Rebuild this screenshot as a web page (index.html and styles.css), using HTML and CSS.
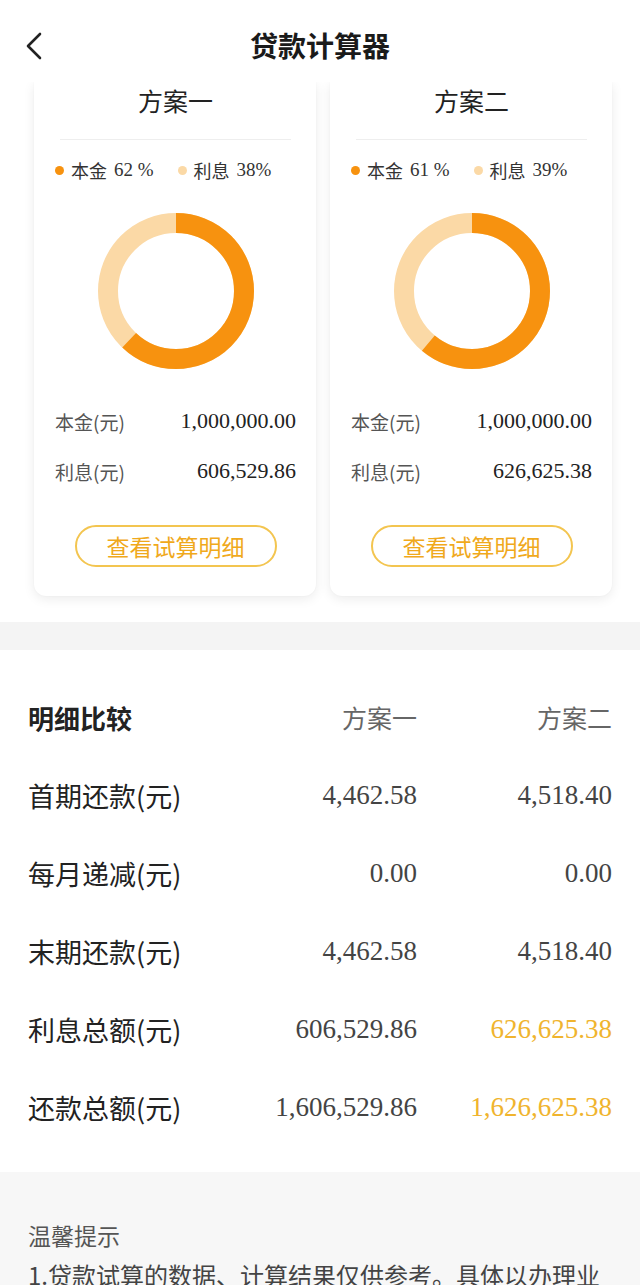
FILE: index.html
```html
<!DOCTYPE html>
<html lang="zh-CN">
<head>
<meta charset="utf-8">
<title>贷款计算器</title>
<link rel="stylesheet" href="styles.css">
</head>
<body>
<div class="page">
  <header class="topbar">
    <span class="back">
      <svg width="18" height="28" viewBox="0 0 18 28"><path d="M15 2 L3 14 L15 26" fill="none" stroke="#222" stroke-width="2.6" stroke-linecap="round" stroke-linejoin="round"/></svg>
    </span>
    <h1 class="title">贷款计算器</h1>
  </header>

  <section class="cards">
    <div class="card">
      <div class="card-title">方案一</div>
      <div class="divider"></div>
      <div class="legend">
        <span class="lg"><i class="dot dot-main"></i>本金 <em>62 %</em></span>
        <span class="lg"><i class="dot dot-int"></i>利息 <em>38%</em></span>
      </div>
      <div class="donut">
        <svg width="156" height="156" viewBox="0 0 156 156">
          <circle cx="78" cy="78" r="68" fill="none" stroke="#fbd9a6" stroke-width="20"/>
          <circle cx="78" cy="78" r="68" fill="none" stroke="#f7920f" stroke-width="20" stroke-dasharray="264.9 427.26" transform="rotate(-90 78 78)"/>
        </svg>
      </div>
      <div class="kv"><span class="k">本金(元)</span><span class="v">1,000,000.00</span></div>
      <div class="kv kv2"><span class="k">利息(元)</span><span class="v">606,529.86</span></div>
      <div class="btn">查看试算明细</div>
    </div>
    <div class="card">
      <div class="card-title">方案二</div>
      <div class="divider"></div>
      <div class="legend">
        <span class="lg"><i class="dot dot-main"></i>本金 <em>61 %</em></span>
        <span class="lg"><i class="dot dot-int"></i>利息 <em>39%</em></span>
      </div>
      <div class="donut">
        <svg width="156" height="156" viewBox="0 0 156 156">
          <circle cx="78" cy="78" r="68" fill="none" stroke="#fbd9a6" stroke-width="20"/>
          <circle cx="78" cy="78" r="68" fill="none" stroke="#f7920f" stroke-width="20" stroke-dasharray="260.6 427.26" transform="rotate(-90 78 78)"/>
        </svg>
      </div>
      <div class="kv"><span class="k">本金(元)</span><span class="v">1,000,000.00</span></div>
      <div class="kv kv2"><span class="k">利息(元)</span><span class="v">626,625.38</span></div>
      <div class="btn">查看试算明细</div>
    </div>
  </section>

  <div class="band"></div>

  <section class="compare">
    <div class="row head">
      <span class="lbl strong">明细比较</span>
      <span class="col">方案一</span>
      <span class="col">方案二</span>
    </div>
    <div class="row">
      <span class="lbl">首期还款(元)</span>
      <span class="num">4,462.58</span>
      <span class="num">4,518.40</span>
    </div>
    <div class="row">
      <span class="lbl">每月递减(元)</span>
      <span class="num">0.00</span>
      <span class="num">0.00</span>
    </div>
    <div class="row">
      <span class="lbl">末期还款(元)</span>
      <span class="num">4,462.58</span>
      <span class="num">4,518.40</span>
    </div>
    <div class="row">
      <span class="lbl">利息总额(元)</span>
      <span class="num">606,529.86</span>
      <span class="num hi">626,625.38</span>
    </div>
    <div class="row">
      <span class="lbl">还款总额(元)</span>
      <span class="num">1,606,529.86</span>
      <span class="num hi">1,626,625.38</span>
    </div>
  </section>

  <section class="tips">
    <div class="tips-title">温馨提示</div>
    <p class="tips-text">1.贷款试算的数据、计算结果仅供参考。具体以办理业务时的实际结果为准。</p>
  </section>
</div>
</body>
</html>
```

FILE: styles.css
```css
* { box-sizing: border-box; }
html, body { margin: 0; padding: 0; background: #fff; }
body {
  font-family: "Noto Sans CJK SC", "Noto Sans", sans-serif;
  color: #222;
  width: 640px;
  height: 1285px;
  overflow: hidden;
}
.page { width: 640px; }

.topbar {
  height: 82px;
  display: flex;
  align-items: center;
  justify-content: center;
  position: relative;
  background: #fff;
  padding-top: 8px;
}
.back {
  position: absolute;
  left: 25px;
  top: 32px;
  width: 18px;
  height: 28px;
  display: block;
}
.back svg { display: block; }
.title {
  margin: 0;
  font-size: 28px;
  font-weight: 700;
  line-height: 36px;
  color: #1a1a1a;
}

.cards {
  display: flex;
  gap: 14px;
  padding: 0 28px 26px 34px;
  background: #fff;
}
.card {
  width: 282px;
  background: #fff;
  border-radius: 0 0 12px 12px;
  box-shadow: 0 3px 12px rgba(0, 0, 0, 0.08), 0 0 2px rgba(0,0,0,0.04);
  padding: 0 20px 29px 21px;
  display: flex;
  flex-direction: column;
}
.card-title {
  text-align: center;
  font-size: 25px;
  line-height: 36px;
  color: #222;
}
.divider {
  height: 1px;
  background: #eeeeee;
  margin: 21px 5px 0 5px;
}
.legend {
  margin-top: 18px;
  height: 24px;
  display: flex;
  align-items: center;
  gap: 24px;
  font-size: 18px;
  color: #333;
}
.lg { display: flex; align-items: center; white-space: nowrap; }
.lg em {
  font-style: normal;
  font-family: "Liberation Serif", serif;
  font-size: 19px;
  margin-left: 7px;
  color: #333;
}
.dot {
  width: 9px;
  height: 9px;
  border-radius: 50%;
  margin-right: 7px;
  display: inline-block;
}
.dot-main { background: #f7920f; }
.dot-int { background: #fbd9a6; }

.donut {
  margin-top: 31px;
  display: flex;
  justify-content: center;
}
.donut svg { display: block; }

.kv {
  margin-top: 37px;
  height: 30px;
  display: flex;
  align-items: center;
  justify-content: space-between;
}
.kv2 { margin-top: 20px; }
.k { font-size: 19px; color: #555; }
.v {
  font-family: "Liberation Serif", serif;
  font-size: 22px;
  color: #222;
}

.btn {
  margin: 39px auto 0;
  width: 202px;
  height: 42px;
  border: 2px solid #f3c550;
  border-radius: 21px;
  display: flex;
  align-items: center;
  justify-content: center;
  font-size: 23px;
  color: #f0a91c;
}

.band { height: 28px; background: #f4f4f4; }

.compare {
  padding: 28px 28px 26px 28px;
  background: #fff;
}
.row {
  display: grid;
  grid-template-columns: 1fr 170px 195px;
  height: 78px;
  align-items: center;
}
.lbl { font-size: 27px; color: #222; white-space: nowrap; }
.lbl.strong { font-weight: 700; font-size: 26px; }
.col { text-align: right; font-size: 25px; color: #666; }
.num {
  text-align: right;
  font-family: "Liberation Serif", serif;
  font-size: 27px;
  color: #444;
}
.num.hi { color: #f0b42e; }

.tips {
  background: #f7f7f7;
  padding: 46px 28px 0 28px;
  height: 200px;
}
.tips-title {
  font-size: 23px;
  line-height: 34px;
  color: #555;
}
.tips-text {
  margin: 6px 0 0;
  font-size: 24px;
  line-height: 34px;
  color: #444;
}
```
